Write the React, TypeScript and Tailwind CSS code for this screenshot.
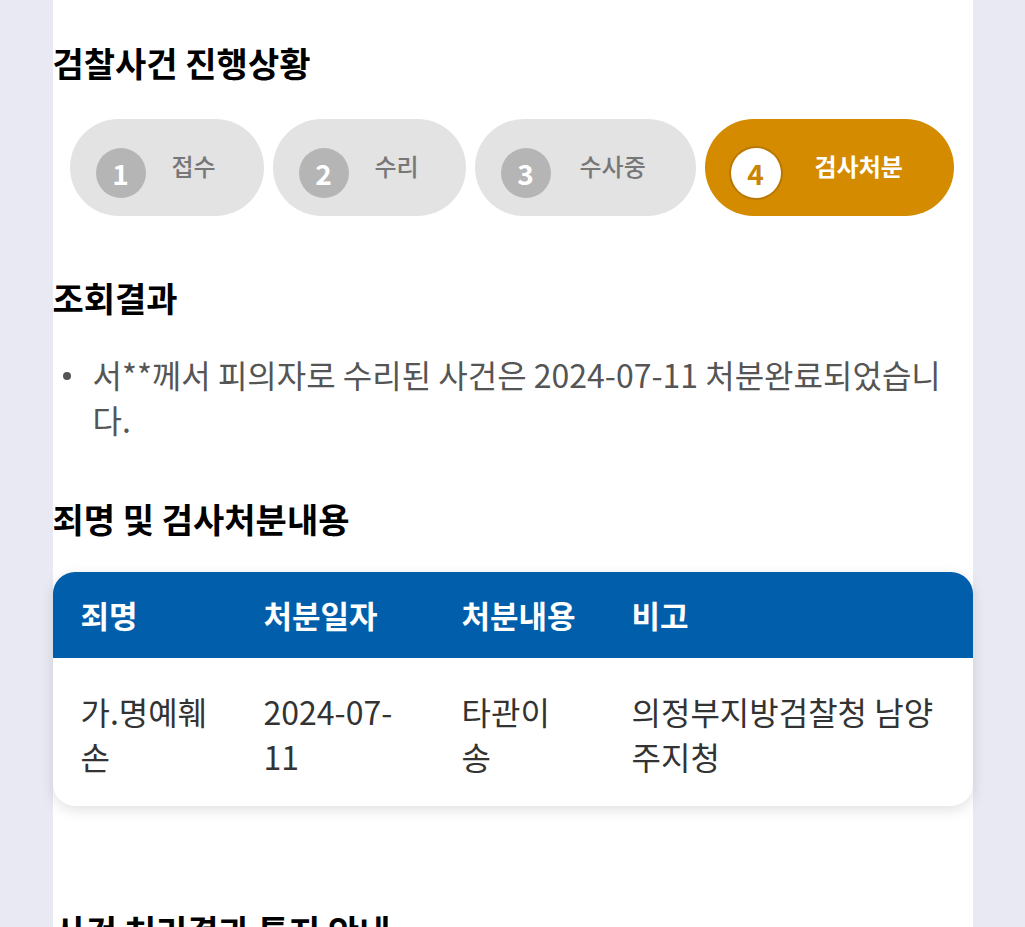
import React from 'react';

interface Step {
    no: number;
    label: string;
    width: string;
    gap: string;
    active?: boolean;
}

const steps: Step[] = [
    { no: 1, label: '접수', width: 'w-[194px]', gap: 'gap-[26px]' },
    { no: 2, label: '수리', width: 'w-[193px]', gap: 'gap-[26px]' },
    { no: 3, label: '수사중', width: 'w-[221px]', gap: 'gap-[29px]' },
    { no: 4, label: '검사처분', width: 'w-[249px]', gap: 'gap-[34px]', active: true },
];

const rows = [
    { name: '가.명예훼손', result: '타관이송', note: '의정부지방검찰청 남양주지청' },
];

const font = "font-['Noto_Sans_CJK_KR','Noto_Sans',sans-serif]";

const StepPill: React.FC<{ step: Step }> = ({ step }) => (
    <div
        className={`${step.width} ${step.gap} h-[97px] rounded-full flex items-center pl-[26px] shrink-0 ${
            step.active ? 'bg-[#d48b00]' : 'bg-[#e3e3e3]'
        }`}
    >
        <div
            className={`w-[50px] h-[50px] mt-[10px] rounded-full flex items-center justify-center text-[28px] font-bold leading-none ${
                step.active
                    ? 'bg-white text-[#c98400] ring-2 ring-[#b97800]'
                    : 'bg-[#b5b5b5] text-white'
            }`}
        >
            {step.no}
        </div>
        <span
            className={`text-[24px] leading-none mb-[4px] ${
                step.active ? 'text-white font-bold' : 'text-[#777777] font-medium'
            }`}
        >
            {step.label}
        </span>
    </div>
);

const App: React.FC = () => {
    return (
        <div className={`min-h-screen bg-[#e9e9f3] flex justify-center ${font}`}>
            <div className="w-[920px] bg-white pt-[43px] pb-[60px]">
                <h2 className="text-[34px] leading-[40px] font-bold text-black">검찰사건 진행상황</h2>

                <div className="flex gap-[9px] px-[17px] mt-[36px]">
                    {steps.map((s) => (
                        <StepPill key={s.no} step={s} />
                    ))}
                </div>

                <h2 className="text-[34px] leading-[40px] font-bold text-black mt-[62px]">조회결과</h2>
                <ul className="mt-[34px]">
                    <li className="flex items-start text-[32px] leading-[45px] text-[#555555]">
                        <span className="w-[8px] h-[8px] rounded-full bg-[#555555] mt-[20px] ml-[10px] mr-[22px] shrink-0" />
                        <span className="pr-[20px]">서**께서 피의자로 수리된 사건은 2024-07-11 처분완료되었습니다.</span>
                    </li>
                </ul>

                <h2 className="text-[34px] leading-[40px] font-bold text-black mt-[57px]">죄명 및 검사처분내용</h2>

                <div className="mt-[33px] rounded-[22px] overflow-hidden bg-white shadow-[0_4px_14px_rgba(0,0,0,0.12)]">
                    <div className="flex bg-[#005eaa] h-[86px] items-center px-[28px] text-white text-[31px] font-bold">
                        <div className="w-[183px]">죄명</div>
                        <div className="w-[198px]">처분일자</div>
                        <div className="w-[170px]">처분내용</div>
                        <div className="flex-1">비고</div>
                    </div>
                    {rows.map((r) => (
                        <div
                            key={r.name}
                            className="flex px-[28px] pt-[31px] pb-[27px] text-[32px] leading-[45px] text-[#333333]"
                        >
                            <div className="w-[183px] pr-[40px]">{r.name}</div>
                            <div className="w-[198px] pr-[48px]">
                                2024-07-<wbr />11
                            </div>
                            <div className="w-[170px] pr-[70px]">{r.result}</div>
                            <div className="flex-1">{r.note}</div>
                        </div>
                    ))}
                </div>

                <h2 className="text-[34px] leading-[40px] font-bold text-black mt-[105px] pl-[2px]">
                    사건 처리결과 통지 안내
                </h2>
            </div>
        </div>
    );
};

export default App;
